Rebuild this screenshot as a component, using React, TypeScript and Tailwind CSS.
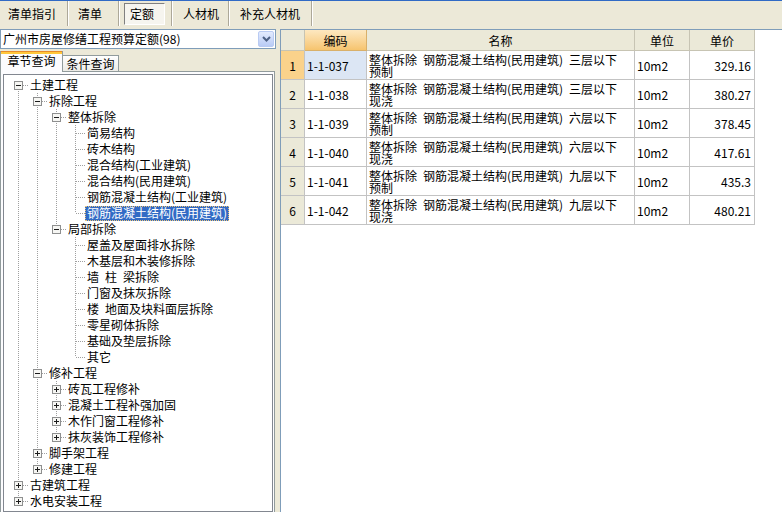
import React from "react";

type TreeNode = {
  label: string;
  exp?: "open" | "closed";
  kids?: TreeNode[];
  sel?: boolean;
};

type FlatRow = {
  node: TreeNode;
  depth: number;
  pipes: boolean[];
  last: boolean;
  first: boolean;
};

// en space gives the 6px half-width gap the original font uses
const SP = "\u2002";

const leaf = (label: string, sel = false): TreeNode => ({ label, sel });
const shut = (label: string): TreeNode => ({ label, exp: "closed" });

const TREE: TreeNode[] = [
  {
    label: "土建工程",
    exp: "open",
    kids: [
      {
        label: "拆除工程",
        exp: "open",
        kids: [
          {
            label: "整体拆除",
            exp: "open",
            kids: [
              leaf("简易结构"),
              leaf("砖木结构"),
              leaf("混合结构(工业建筑)"),
              leaf("混合结构(民用建筑)"),
              leaf("钢筋混凝土结构(工业建筑)"),
              leaf("钢筋混凝土结构(民用建筑)", true),
            ],
          },
          {
            label: "局部拆除",
            exp: "open",
            kids: [
              leaf("屋盖及屋面排水拆除"),
              leaf("木基层和木装修拆除"),
              leaf(`墙${SP}柱${SP}梁拆除`),
              leaf("门窗及抹灰拆除"),
              leaf(`楼${SP}地面及块料面层拆除`),
              leaf("零星砌体拆除"),
              leaf("基础及垫层拆除"),
              leaf("其它"),
            ],
          },
        ],
      },
      {
        label: "修补工程",
        exp: "open",
        kids: [
          shut("砖瓦工程修补"),
          shut("混凝土工程补强加固"),
          shut("木作门窗工程修补"),
          shut("抹灰装饰工程修补"),
        ],
      },
      shut("脚手架工程"),
      shut("修建工程"),
    ],
  },
  shut("古建筑工程"),
  shut("水电安装工程"),
];

function flatten(nodes: TreeNode[], depth: number, pipes: boolean[], out: FlatRow[]) {
  nodes.forEach((node, i) => {
    const last = i === nodes.length - 1;
    out.push({ node, depth, pipes, last, first: depth === 0 && i === 0 });
    if (node.kids && node.exp === "open") flatten(node.kids, depth + 1, [...pipes, !last], out);
  });
  return out;
}

const ROWS = [
  { code: "1-1-037", floors: "三层以下", kind: "预制", price: "329.16" },
  { code: "1-1-038", floors: "三层以下", kind: "现浇", price: "380.27" },
  { code: "1-1-039", floors: "六层以下", kind: "预制", price: "378.45" },
  { code: "1-1-040", floors: "六层以下", kind: "现浇", price: "417.61" },
  { code: "1-1-041", floors: "九层以下", kind: "预制", price: "435.3" },
  { code: "1-1-042", floors: "九层以下", kind: "现浇", price: "480.21" },
];

const DOT = "#a0a0a0";

function Guide({
  up,
  down,
  right,
  box,
}: {
  up?: boolean;
  down?: boolean;
  right?: boolean;
  box?: "open" | "closed";
}) {
  return (
    <svg width="19" height="16" className="shrink-0" shapeRendering="crispEdges">
      {up && <line x1="9.5" y1="0" x2="9.5" y2="8" stroke={DOT} strokeDasharray="1 1" />}
      {down && <line x1="9.5" y1="8" x2="9.5" y2="16" stroke={DOT} strokeDasharray="1 1" />}
      {right && <line x1="10" y1="8.5" x2="19" y2="8.5" stroke={DOT} strokeDasharray="1 1" />}
      {box && (
        <g>
          <rect x="5.5" y="4.5" width="8" height="8" fill="#f6f6f3" stroke="#8e8f8f" />
          <line x1="7" y1="8.5" x2="12" y2="8.5" stroke="#1b1b1b" />
          {box === "closed" && <line x1="9.5" y1="6" x2="9.5" y2="11" stroke="#1b1b1b" />}
        </g>
      )}
    </svg>
  );
}

function Sep() {
  return (
    <div className="flex h-full shrink-0">
      <div className="w-px bg-[#aca899]" />
      <div className="w-px bg-white" />
    </div>
  );
}

function Toolbar() {
  return (
    <div className="flex h-[25px] items-stretch">
      <div className="flex w-[67px] items-center pl-[8px]">清单指引</div>
      <Sep />
      <div className="flex w-[49px] items-center pl-[9px]">清单</div>
      <Sep />
      <div className="flex w-[51px] items-center">
        <div className="ml-[4px] flex h-[22px] w-[41px] items-center border border-t-[#808080] border-l-[#808080] border-r-white border-b-white bg-[#f6f5ef] pl-[5px]">
          定额
        </div>
      </div>
      <Sep />
      <div className="flex w-[55px] items-center pl-[10px]">人材机</div>
      <Sep />
      <div className="flex w-[81px] items-center pl-[10px]">补充人材机</div>
      <Sep />
    </div>
  );
}

function Combo() {
  return (
    <div className="flex h-[20px] w-[276px] items-center border border-[#7f9db9] bg-white">
      <span className="flex-1 pl-[2px] whitespace-nowrap">广州市房屋修缮工程预算定额(98)</span>
      <div className="mr-px flex h-[16px] w-[16px] items-center justify-center rounded-[2px] border border-[#b9cbf3] bg-gradient-to-b from-[#e3ebfe] to-[#b9cbf5]">
        <svg width="9" height="6" viewBox="0 0 9 6">
          <path d="M1 1 L4.5 4.5 L8 1" fill="none" stroke="#4d6185" strokeWidth="2" />
        </svg>
      </div>
    </div>
  );
}

function Tabs() {
  return (
    <div className="flex h-[22px] items-end">
      <div className="relative z-10 -mb-px flex h-[21px] w-[63px] flex-col border-x border-[#919b9c] bg-[#fcfcfe]">
        <div className="h-[1px] bg-[#e68b2c]" />
        <div className="h-[2px] bg-[#ffc83c]" />
        <div className="flex flex-1 justify-center pt-[1px]">章节查询</div>
      </div>
      <div className="flex h-[16px] w-[56px] items-end justify-center border-t border-r border-[#919b9c] bg-gradient-to-b from-white to-[#ecebe6] pb-[1px]">
        条件查询
      </div>
    </div>
  );
}

function Tree() {
  const rows = flatten(TREE, 0, [], []);
  return (
    <div className="h-full overflow-hidden border border-[#828790] bg-white pl-[5px] pt-[2px]">
      {rows.map((r, i) => (
        <div key={i} className="flex h-[16px] items-center">
          {r.pipes.map((p, k) => (
            <Guide key={k} up={p} down={p} />
          ))}
          <Guide up={!r.first} down={!r.last} right box={r.node.exp} />
          {r.node.sel ? (
            <span className="flex h-[15px] items-center whitespace-nowrap border border-dotted border-[#e8c27a] bg-[#316ac5] px-[1px] text-white">
              {r.node.label}
            </span>
          ) : (
            <span className="whitespace-nowrap px-[2px]">{r.node.label}</span>
          )}
        </div>
      ))}
    </div>
  );
}

const COLS = "grid grid-cols-[24px_62px_268px_55px_65px]";
const LINE = "border-r border-b border-[#c3c3c3]";
const HEAD = "flex h-[21px] items-center justify-center border-r border-b border-[#c7c4b3] bg-[#ebe9d8] pt-[2px]";

function Grid() {
  return (
    <div className="w-max">
      <div className={COLS}>
        <div className="h-[21px] border-r border-b border-[#c7c4b3] bg-[#ebe9d8]" />
        <div className="flex h-[21px] items-center justify-center border-r border-b border-[#d9b06a] bg-gradient-to-b from-[#fde8c0] to-[#f6c46e] pt-[2px]">
          编码
        </div>
        <div className={HEAD}>名称</div>
        <div className={HEAD}>单位</div>
        <div className={HEAD}>单价</div>
      </div>
      {ROWS.map((r, i) => (
        <div key={r.code} className={COLS}>
          <div
            className={`flex h-[29px] items-center justify-center pt-[2px] ${LINE} ${
              i === 0 ? "bg-[#fad28b]" : "bg-[#ebe9d8]"
            }`}
          >
            {i + 1}
          </div>
          <div className={`flex items-center pl-[2px] pt-[2px] ${LINE} ${i === 0 ? "bg-[#dce6f4]" : ""}`}>
            {r.code}
          </div>
          <div className={`flex items-center overflow-hidden whitespace-nowrap pl-[2px] pt-[2px] leading-[12px] ${LINE}`}>
            <div>
              <div>{`整体拆除${SP}钢筋混凝土结构(民用建筑)${SP}${r.floors}`}</div>
              <div>{r.kind}</div>
            </div>
          </div>
          <div className={`flex items-center pl-[2px] pt-[2px] ${LINE}`}>10m2</div>
          <div className={`flex items-center justify-end pr-[3px] pt-[2px] ${LINE}`}>{r.price}</div>
        </div>
      ))}
    </div>
  );
}

export default function App() {
  return (
    <div className="h-[512px] w-[782px] select-none overflow-hidden bg-[#ece9d8] font-['Noto_Sans_CJK_SC',sans-serif] text-[12px] leading-none text-black">
      <div className="h-px bg-[#316ac5]" />
      <Toolbar />
      <div className="flex h-[486px]">
        <div className="flex w-[276px] shrink-0 flex-col pt-[3px]">
          <Combo />
          <Tabs />
          <div className="w-[275px] flex-1 border-x border-t border-[#919b9c] bg-[#fcfcfe] pl-[2px] pr-px pt-[2px]">
            <Tree />
          </div>
        </div>
        <div className="w-[4px] shrink-0" />
        <div className="mt-[3px] flex-1 border-l border-t border-[#7f9db9] bg-white">
          <Grid />
        </div>
      </div>
    </div>
  );
}
